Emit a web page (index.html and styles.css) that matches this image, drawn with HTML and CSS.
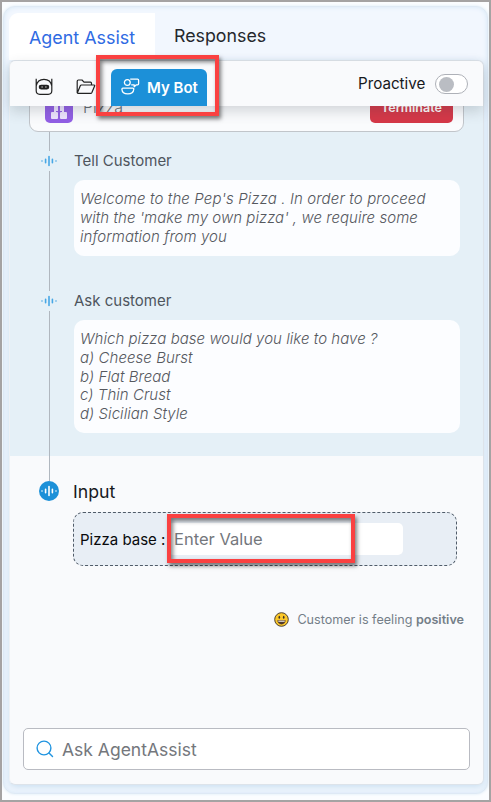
FILE: index.html
```html
<!DOCTYPE html>
<html lang="en">
<head>
<meta charset="utf-8">
<title>Agent Assist</title>
<link rel="stylesheet" href="styles.css">
</head>
<body>
<svg width="0" height="0" class="defs">
  <symbol id="wave" viewBox="0 0 16 12">
    <path d="M1 6h.01M4.600 4.200v3.600M8 1.500v9M11.400 4.200v3.600M15 6h.01" fill="none" stroke="currentColor" stroke-width="1.600" stroke-linecap="round"/>
  </symbol>
</svg>
<div class="widget">
  <nav class="tabs">
    <div class="tab active"><span>Agent Assist</span></div>
    <div class="tab"><span>Responses</span></div>
  </nav>
  <main class="panel">
    <header class="toolbar">
      <svg class="bot-icon" width="18" height="18" viewBox="0 0 18 18" fill="none" stroke="#222" stroke-width="1.200">
        <path d="M1.200 .8v12c0 2 1.600 3.500 3.600 3.500h8.400c2 0 3.600-1.500 3.600-3.500V.8M1.200 8C2 3.500 5 1.300 9 1.300S16 3.500 16.800 8"/>
        <rect x="4.300" y="7.300" width="9.400" height="3.600" rx="1.800" fill="#222"/>
        <path d="M6.500 9h1.200M10.300 9h1.200" stroke="#fff"/>
      </svg>
      <svg class="folder-icon" width="20" height="16" viewBox="0 0 20 16" fill="none" stroke="#222" stroke-width="1.200" stroke-linejoin="round">
        <path d="M1.200 14V2.200Q1.200 1 2.400 1H6l2 2.200h6.500q1 0 1 1V6M1.200 14.200 4.300 6.700Q4.600 6 5.400 6H18q1 0 .6 1l-2.700 6.500q-.4.900-1.300.9H2q-.8 0-.8-.8"/>
      </svg>
      <div class="my-bot">
        <svg width="19" height="17" viewBox="0 0 19 17" fill="none" stroke="#fff" stroke-width="1.300" stroke-linejoin="round">
          <circle cx="6.300" cy="4.500" r="2.900"/>
          <path d="M9.200 1.200h7.400q1 0 1 1v3.600q0 1-1 1h-1.200l-2.200 1.900V6.800h-3M1.900 10.200h9.900q1.100 0 1 1c-.3 3-2.700 4.700-6 4.700S1.100 14.200.9 11.200q0-1 1-1Z"/>
        </svg>
        <span>My Bot</span>
      </div>
      <span class="proactive">Proactive</span>
      <span class="switch"></span>
    </header>
    <section class="history">
      <div class="card">
        <span class="card-icon"><svg width="18" height="16" viewBox="0 0 18 16" fill="#eee5ff"><path d="M4 0h4v7H6v2H4V7h0zM10 0h4v9h-2V7h-2z"/><rect x="1" y="8" width="7" height="7" rx="1"/><rect x="10" y="8" width="7" height="7" rx="1"/></svg></span>
        <span class="card-name">Pizza</span>
        <span class="terminate">Terminate</span>
      </div>
      <div class="step tell">
        <div class="rail"><svg width="16" height="12"><use href="#wave"/></svg></div>
        <div class="body"><h3>Tell Customer</h3>
          <p class="bubble"><span class="lead">Welcome to the Pep's Pizza . In order to proceed</span><br>with the 'make my own pizza' , we require some<br>information from you</p></div>
      </div>
      <div class="step ask">
        <div class="rail"><svg width="16" height="12"><use href="#wave"/></svg></div>
        <div class="body"><h3>Ask customer</h3>
          <p class="bubble">Which pizza base would you like to have ?<br>a) Cheese Burst<br>b) Flat Bread<br>c) Thin Crust<br>d) Sicilian Style</p></div>
      </div>
    </section>
    <section class="current">
      <div class="rail"><i></i><span class="dot"><svg width="16" height="12"><use href="#wave"/></svg></span></div>
      <div class="input-body">
        <h2>Input</h2>
        <div class="field"><label>Pizza base :</label><div class="value">Enter Value</div></div>
      </div>
    </section>
    <div class="mood">
      <svg width="15" height="15" viewBox="0 0 15 15"><circle cx="7.500" cy="7.500" r="6.800" fill="#fcc829" stroke="#4d402f" stroke-width="1"/><ellipse cx="5.300" cy="5.200" rx=".8" ry="1.500" fill="#3b3028"/><ellipse cx="9.700" cy="5.200" rx=".8" ry="1.500" fill="#3b3028"/><path d="M3.300 8.300h8.400c-.2 2.800-2 4.100-4.200 4.100S3.500 11.100 3.300 8.300Z" fill="#50392c"/><path d="M4.300 8.700h6.400v1H4.300z" fill="#fff"/></svg>
      <span>Customer is feeling <b>positive</b></span>
    </div>
    <div class="search">
      <svg width="18" height="18" viewBox="0 0 18 18" fill="none" stroke="#2094e0" stroke-width="1.400" stroke-linecap="round"><circle cx="8" cy="8" r="6.900"/><path d="m13 13 3.500 3.500"/></svg>
      <span>Ask AgentAssist</span>
    </div>
  </main>
</div>
<div class="highlight highlight-bot"></div>
<div class="highlight highlight-value"></div>
</body>
</html>
```
FILE: styles.css
```css
* { box-sizing: border-box; }
body {
  margin: 0;
  width: 491px;
  height: 802px;
  overflow: hidden;
  padding: 4px 1px 6px;
  border: 2px solid #a5a3a3;
  background: #fbfdff;
  font-family: Inter, "Liberation Sans", sans-serif;
  position: relative;
}
h2, h3, p { margin: 0; font-weight: 400; }
.defs { position: absolute; }
span, label, h2, h3, .value { white-space: nowrap; }
.widget {
  width: 485px;
  height: 788px;
  padding: 6px 5px 0;
  border-radius: 12px;
  border: 1px solid #dfeaf5;
  background: #f2f7fe;
  box-shadow: inset 0 0 5px #d6e8f7, 0 0 3px #dbeaf5;
}
.tabs { display: flex; height: 47px; }
.tab { width: 146px; height: 47px; padding: 12px 0 0 20px; font-size: 17.9px; line-height: 25px; color: #25282d; }
.tab + .tab { padding: 10px 0 0 19px; font-size: 17.8px; }
.tab.active { background: #fff; color: #2f6be3; border-radius: 9px 0 0; }
.tab span { display: inline-block; }
.panel {
  display: flex;
  flex-direction: column;
  width: 475px;
  height: 725px;
  border: 1px solid #dde3ea;
  border-left-color: #edf1f5;
  border-radius: 6px;
  background: #f9fafc;
  box-shadow: 0 2px 7px #c9dff0;
}
.toolbar {
  position: relative;
  z-index: 1;
  display: flex;
  flex: none;
  height: 45px;
  padding-left: 25px;
  background: #f9fafc;
  border-radius: 6px 6px 0 0;
  box-shadow: 0 5px 14px rgba(50, 60, 70, .2);
}
.bot-icon { margin-top: 17px; }
.folder-icon { margin: 18px 0 0 23px; }
.my-bot {
  display: flex;
  width: 96px;
  height: 37px;
  margin: 8px 0 0 15px;
  padding: 9px 0 0 10px;
  gap: 7px;
  border-radius: 6px 6px 0 0;
  background: #1c90d8;
  color: #fff;
  font-size: 15px;
  font-weight: 600;
  line-height: 20px;
}
.proactive { margin: 13px 0 0 151px; width: 68px; font-size: 15.200px; line-height: 20px; color: #17191d; }
.switch { width: 33px; height: 20px; margin: 13px 0 0 9px; padding: 1px 3px; border: 1px solid #aeb1b8; border-radius: 10px; background: #fff; }
.switch::before { content: ""; display: block; width: 15px; height: 15px; margin-top: .5px; border-radius: 50%; background: #babdc3; }
.history { height: 350px; flex: none; overflow: hidden; background: #e5f0f7; }
.card {
  display: flex;
  width: 435px;
  height: 55px;
  margin: -29px 0 0 19px;
  padding: 15px 10px 0 15px;
  border: 1px solid #c1c5ca;
  border-radius: 9px;
  background: #fafbfd;
}
.card-icon { width: 28px; height: 30px; padding: 11px 5px; border-radius: 5px; background: #925fe5; }
.card-name { margin: 4px 0 0 10px; color: #666b71; font-size: 16px; font-weight: 300; line-height: 20px; }
.terminate { width: 83px; height: 30px; margin-left: auto; border-radius: 5px; background: #d53848; color: #fff; font-size: 12.5px; font-weight: 600; line-height: 30px; text-align: center; }
.step { display: flex; padding-left: 29px; height: 140px; }
.step.ask { height: 184px; }
.rail { display: flex; flex: none; flex-direction: column; align-items: center; width: 20px; color: #47a7e5; }
.step .rail::after { content: ""; flex: 1; width: 1px; background: #b0b7bf; margin-top: 4px; }
.step .rail svg { margin-top: 4px; flex: none; }
.tell .rail::before { content: ""; width: 1px; height: 19px; background: #b0b7bf; }
.step.tell { height: 159px; }
.body { padding-left: 15px; }
.body h3 { font-size: 15px; line-height: 20px; color: #4e555d; }
.tell h3 { margin-top: 19px; }
.bubble {
  width: 386px;
  height: 76px;
  margin-top: 9px;
  padding: 10px 6px 0;
  border-radius: 10px;
  background: #fcfdff;
  color: #55585e;
  font-size: 15px;
  font-style: italic;
  font-weight: 300;
  line-height: 18.75px;
  letter-spacing: .04px;
  white-space: nowrap;
}
.lead { letter-spacing: .13px; }
.ask .bubble { height: 113px; }
.current { display: flex; flex: none; height: 110px; padding-left: 29px; }
.current .rail i { width: 1px; height: 25px; background: #b0b7bf; }
.dot { display: flex; align-items: center; justify-content: center; width: 20px; height: 20px; flex: none; border-radius: 50%; background: #1c90d8; color: #fff; }
.input-body { padding: 23px 0 0 14px; }
.input-body h2 { font-size: 17.7px; line-height: 25px; color: #17191d; }
.field { display: flex; width: 384px; height: 54px; margin-top: 8px; padding: 10px 0 0 6px; border: 1px dashed #505c69; border-radius: 10px; background: #e8eef5; }
.field label { width: 88px; color: #090a0c; font-size: 15px; line-height: 34px; }
.value { width: 235px; height: 32px; padding-left: 6px; border-radius: 5px; background: #fff; color: #74777c; font-size: 16.5px; line-height: 32px; }
.mood { display: flex; align-items: center; height: 20px; margin: 43px 19px 0 auto; gap: 8px; color: #747e88; font-size: 12.6px; }
.mood b { font-weight: 600; }
.search { display: flex; align-items: center; flex: none; width: 447px; height: 42px; margin: auto 0 14px 13px; padding-left: 12px; gap: 8px; border: 1px solid #b9bbc2; border-radius: 5px; background: #fff; color: #74777c; font-size: 17.5px; }
.highlight { position: absolute; z-index: 3; border: 4px solid #fa4141; box-shadow: 2px 3px 4px rgba(0, 0, 0, .5), inset 2px 3px 4px rgba(0, 0, 0, .5); }
.highlight-bot { left: 94px; top: 53px; width: 123px; height: 61px; }
.highlight-value { left: 165px; top: 512px; width: 188px; height: 49px; }
```
